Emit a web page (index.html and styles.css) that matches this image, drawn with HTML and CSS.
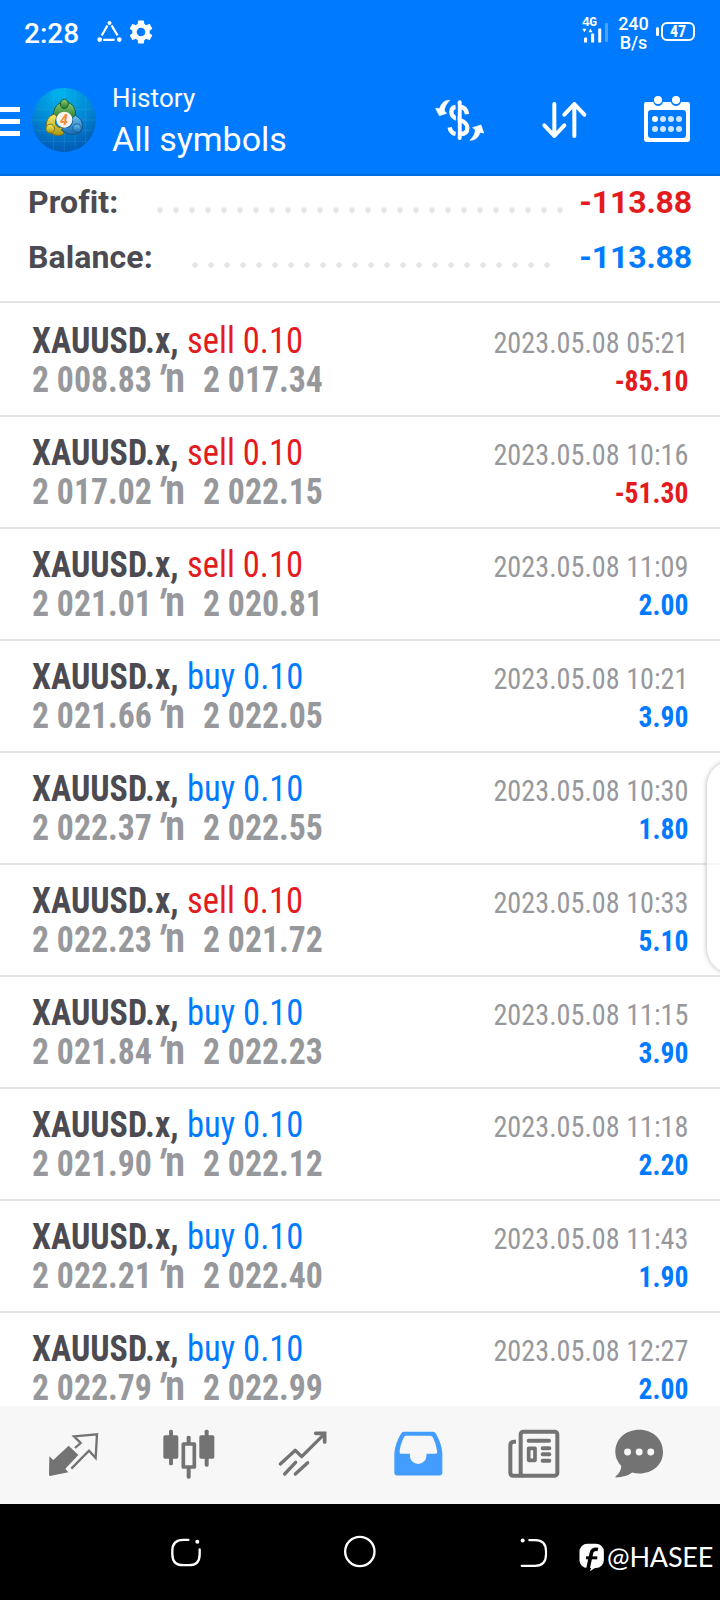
FILE: index.html
```html
<!DOCTYPE html>
<html lang="en">
<head>
<meta charset="utf-8">
<title>History</title>
<link rel="stylesheet" href="styles.css">
</head>
<body>
<div class="screen">
  <header class="top">
    <div class="status">
      <span class="clock">2:28</span>
      <svg class="s-tri" viewBox="290 60 74 68" fill="none" stroke="#fff" stroke-width="6.500"><path d="M321 76L304 106M333 76L351 106M308 119H342"/><g fill="#fff" stroke="none"><circle cx="327" cy="69" r="6"/><circle cx="298" cy="118" r="7"/><circle cx="356" cy="118" r="7"/></g></svg>
      <svg class="s-gear" viewBox="2.2 2 19.6 20" fill="#fff"><path d="M19.14 12.94c.04-.3.06-.61.06-.94 0-.32-.02-.64-.07-.94l2.03-1.58c.18-.14.23-.41.12-.61l-1.92-3.32c-.12-.22-.37-.29-.59-.22l-2.39.96c-.5-.38-1.03-.7-1.62-.94L14.4 2.8c-.04-.24-.24-.41-.48-.41h-3.84c-.24 0-.43.17-.47.41l-.36 2.54c-.59.24-1.13.57-1.62.94l-2.39-.96c-.22-.08-.47 0-.59.22L2.74 8.87c-.12.21-.08.47.12.61l2.03 1.58c-.05.3-.09.63-.09.94s.02.64.07.94l-2.03 1.58c-.18.14-.23.41-.12.61l1.92 3.32c.12.22.37.29.59.22l2.39-.96c.5.38 1.03.7 1.62.94l.36 2.54c.05.24.24.41.48.41h3.84c.24 0 .44-.17.47-.41l.36-2.54c.59-.24 1.13-.56 1.62-.94l2.39.96c.22.08.47 0 .59-.22l1.92-3.32c.12-.22.07-.47-.12-.61l-2.01-1.58zM12 15.6c-1.98 0-3.6-1.62-3.6-3.6s1.62-3.6 3.6-3.6 3.6 1.62 3.6 3.6-1.62 3.6-3.6 3.6z"/></svg>
      <div class="signal">
        <span class="net">4G</span>
        <svg viewBox="666 83 80 44" fill="#fff"><path d="M667 85h12l-6 10zM685 95h12l-6-10z"/><rect x="672" y="111" width="9" height="15" rx="2"/><rect x="693" y="99" width="9" height="27" rx="2"/><rect x="714" y="84" width="9" height="42" rx="2"/></svg>
        <i class="bar-off"></i>
      </div>
      <div class="rate"><span>240</span><span>B/s</span></div>
      <i class="bat-tip"></i>
      <span class="battery">47</span>
    </div>
    <div class="bar">
      <svg class="menu" viewBox="0 0 20 29" fill="#fff"><path d="M0 0h20v5H0zM0 12h20v5H0zM0 24h20v5H0z"/></svg>
      <svg class="logo" viewBox="96 264 192 192">
        <defs>
          <radialGradient id="bg" cx=".45" cy=".08" r=".95"><stop offset="0" stop-color="#00b4ee"/><stop offset=".55" stop-color="#0385d2"/><stop offset="1" stop-color="#0056b0"/></radialGradient>
          <linearGradient id="gr" x2="0" y2="1"><stop offset="0" stop-color="#8fd07c"/><stop offset="1" stop-color="#22772b"/></linearGradient>
          <linearGradient id="ye" x2="0" y2="1"><stop offset="0" stop-color="#f5ee6b"/><stop offset="1" stop-color="#a99712"/></linearGradient>
          <linearGradient id="bl" x2="0" y2="1"><stop offset="0" stop-color="#6fc3ef"/><stop offset="1" stop-color="#1268b5"/></linearGradient>
        </defs>
        <circle cx="192" cy="360" r="96" fill="url(#bg)"/>
        <path d="M161 270V450M193 264V456M225 270V450M257 290V430M110 328H274M97 360H287M110 392H274M122 424H262" stroke="#5cc6f0" stroke-opacity=".28" stroke-width="2"/>
        <g stroke-width="3">
          <path d="M160 352C158 322 175 306 195 306C219 308 229 325 226 352L214 358C208 334 180 334 172 350Z" fill="url(#gr)" stroke="#245f34"/>
          <path d="M166 342C143 346 134 368 142 388C152 407 178 410 192 402L188 382C170 386 160 372 170 352Z" fill="url(#ye)" stroke="#736b23"/>
          <path d="M226 346C246 356 252 376 244 394C228 410 200 404 184 390L194 380C212 386 220 372 216 354Z" fill="url(#bl)" stroke="#195785"/>
          <ellipse cx="193" cy="312" rx="12" ry="14" fill="url(#gr)" stroke="#206126"/>
          <circle cx="151" cy="386" r="13" fill="url(#ye)" stroke="#837719"/>
          <circle cx="231" cy="385" r="13" fill="url(#bl)" stroke="#185e98"/>
        </g>
        <circle cx="193" cy="359" r="24" fill="#f6f3f1"/>
        <text class="logo-num" x="192" y="374" text-anchor="middle">4</text>
      </svg>
      <div class="titles"><span class="t1">History</span><span class="t2">All symbols</span></div>
      <svg class="a-money" viewBox="226 296 150 126" fill="none" stroke="#fff">
        <path d="M300 306V413" stroke-width="12" stroke-linecap="round"/>
        <path d="M322 342C320 325 311 320 300 320M288 320C279 321 275 328 275 336C275 348 284 353 300 359C317 365 323 371 323 383C323 396 314 401 303 401M288 401C278 399 272 393 270 381" stroke-width="13"/>
        <path d="M291 312V408" stroke="#007bff" stroke-width="5"/>
        <path d="M270 300C256 299 244 309 240 325L228 324L239 346L261 339L254 332C254 319 261 310 270 300ZM331 420C346 420 357 411 361 396L372 398L364 374L339 382L347 388C347 400 341 409 331 420Z" fill="#fff" stroke="#fff" stroke-width="2"/>
      </svg>
      <svg class="a-sort" viewBox="545 303 135 114" fill="none" stroke="#fff" stroke-width="12" stroke-linecap="round" stroke-linejoin="round"><path d="M582 312V408M552 376L582 408L612 376M642 408V312M612 344L642 312L672 344"/></svg>
      <svg class="a-cal" viewBox="852 288 138 138"><path fill="#fff" fill-rule="evenodd" d="M858 306H880C884 322 905 322 909 306H933C937 322 959 322 963 306H984Q990 306 990 313V418Q990 426 982 426H860Q852 426 852 418V313Q852 306 858 306ZM873 330Q864 330 864 339V405Q864 414 873 414H969Q978 414 978 405V339Q978 330 969 330Z"/><g fill="#fff"><circle cx="894" cy="300" r="12"/><circle cx="948" cy="300" r="12"/><circle cx="885" cy="357" r="9"/></g><g fill="#cce4ff"><circle cx="909" cy="357" r="9"/><circle cx="933" cy="357" r="9"/><circle cx="957" cy="357" r="9"/><circle cx="885" cy="387" r="9"/><circle cx="909" cy="387" r="9"/><circle cx="933" cy="387" r="9"/><circle cx="957" cy="387" r="9"/></g></svg>
    </div>
  </header>

  <section class="summary">
    <div class="sum"><span class="sum-label">Profit:</span><i class="dots dots-profit"></i><span class="sum-val neg">-113.88</span></div>
    <div class="sum"><span class="sum-label">Balance:</span><i class="dots dots-balance"></i><span class="sum-val pos">-113.88</span></div>
  </section>

  <main class="deals">
    <div class="deal"><div class="l"><p class="name"><b>XAUUSD.x,</b><span class="neg">sell 0.10</span></p><p class="price"><span>2 008.83</span><i class="prime">′</i><i class="n">n</i><span>2 017.34</span></p></div><div class="r"><p class="date">2023.05.08 05:21</p><p class="pl neg">-85.10</p></div></div>
    <div class="deal"><div class="l"><p class="name"><b>XAUUSD.x,</b><span class="neg">sell 0.10</span></p><p class="price"><span>2 017.02</span><i class="prime">′</i><i class="n">n</i><span>2 022.15</span></p></div><div class="r"><p class="date">2023.05.08 10:16</p><p class="pl neg">-51.30</p></div></div>
    <div class="deal"><div class="l"><p class="name"><b>XAUUSD.x,</b><span class="neg">sell 0.10</span></p><p class="price"><span>2 021.01</span><i class="prime">′</i><i class="n">n</i><span>2 020.81</span></p></div><div class="r"><p class="date">2023.05.08 11:09</p><p class="pl pos">2.00</p></div></div>
    <div class="deal"><div class="l"><p class="name"><b>XAUUSD.x,</b><span class="pos">buy 0.10</span></p><p class="price"><span>2 021.66</span><i class="prime">′</i><i class="n">n</i><span>2 022.05</span></p></div><div class="r"><p class="date">2023.05.08 10:21</p><p class="pl pos">3.90</p></div></div>
    <div class="deal"><div class="l"><p class="name"><b>XAUUSD.x,</b><span class="pos">buy 0.10</span></p><p class="price"><span>2 022.37</span><i class="prime">′</i><i class="n">n</i><span>2 022.55</span></p></div><div class="r"><p class="date">2023.05.08 10:30</p><p class="pl pos">1.80</p></div></div>
    <div class="deal"><div class="l"><p class="name"><b>XAUUSD.x,</b><span class="neg">sell 0.10</span></p><p class="price"><span>2 022.23</span><i class="prime">′</i><i class="n">n</i><span>2 021.72</span></p></div><div class="r"><p class="date">2023.05.08 10:33</p><p class="pl pos">5.10</p></div></div>
    <div class="deal"><div class="l"><p class="name"><b>XAUUSD.x,</b><span class="pos">buy 0.10</span></p><p class="price"><span>2 021.84</span><i class="prime">′</i><i class="n">n</i><span>2 022.23</span></p></div><div class="r"><p class="date">2023.05.08 11:15</p><p class="pl pos">3.90</p></div></div>
    <div class="deal"><div class="l"><p class="name"><b>XAUUSD.x,</b><span class="pos">buy 0.10</span></p><p class="price"><span>2 021.90</span><i class="prime">′</i><i class="n">n</i><span>2 022.12</span></p></div><div class="r"><p class="date">2023.05.08 11:18</p><p class="pl pos">2.20</p></div></div>
    <div class="deal"><div class="l"><p class="name"><b>XAUUSD.x,</b><span class="pos">buy 0.10</span></p><p class="price"><span>2 022.21</span><i class="prime">′</i><i class="n">n</i><span>2 022.40</span></p></div><div class="r"><p class="date">2023.05.08 11:43</p><p class="pl pos">1.90</p></div></div>
    <div class="deal"><div class="l"><p class="name"><b>XAUUSD.x,</b><span class="pos">buy 0.10</span></p><p class="price"><span>2 022.79</span><i class="prime">′</i><i class="n">n</i><span>2 022.99</span></p></div><div class="r"><p class="date">2023.05.08 12:27</p><p class="pl pos">2.00</p></div></div>
  </main>
  <div class="edge-panel"></div>

  <nav class="tabs">
    <svg class="n1" viewBox="147 88 150 150"><path d="M206 138L235 166L196 207L205 218L150 229Q147 228 147 225L148 170L160 181Z" fill="#737373"/><path d="M225 145L242 130L222 110L291 104L287 175L267 153L214 207" fill="none" stroke="#737373" stroke-width="7"/></svg>
    <svg class="n2" viewBox="488 88 156 150" fill="#737373"><rect x="489" y="107" width="45" height="70" rx="5"/><rect x="506" y="90" width="12" height="107" rx="5"/><rect x="597" y="107" width="45" height="70" rx="5"/><rect x="613" y="90" width="12" height="111" rx="5"/><rect x="559" y="108" width="12" height="25" rx="5"/><rect x="559" y="200" width="12" height="37" rx="5"/><rect x="549" y="133" width="33" height="69" fill="none" stroke="#737373" stroke-width="11" stroke-linejoin="round"/></svg>
    <svg class="n3" viewBox="838 88 150 150" fill="none" stroke="#737373" stroke-width="10" stroke-linecap="round" stroke-linejoin="round"><path d="M842 193L887 152L906 171L973 104M855 223L888 188M887 223L924 189"/><path d="M948 101H975V127" stroke-width="11" stroke-linejoin="miter"/></svg>
    <svg class="n4" viewBox="102 88 148 150"><path fill="#429dfe" fill-rule="evenodd" d="M132 96H219Q226 96 229 102Q246 133 248 160V219Q248 228 239 228H112Q103 228 103 219V160Q106 130 123 102Q126 96 132 96ZM138 108Q133 109 130 116Q120 139 119 156Q118 162 123 162H150V168A25 25 0 0 0 200 168V162H229Q234 161 232 154Q230 134 220 114Q217 108 212 108Z"/></svg>
    <svg class="n5" viewBox="444 88 154 150" fill="none" stroke="#737373" stroke-width="12"><rect x="481" y="96" width="110" height="132" rx="8"/><path d="M467 126H460Q450 126 450 138V219Q450 228 460 228H488"/><rect x="505" y="146" width="19" height="36" stroke-width="11" stroke-linejoin="round"/><path d="M505 123H566M547 146H567M547 164H567M547 183H567" stroke-linecap="round"/></svg>
    <svg class="n6" viewBox="764 88 148 150"><path fill="#737373" d="M837 90C880 90 909 120 909 157C909 195 878 222 837 222Q826 222 816 219Q798 233 766 234Q763 232 768 229Q782 217 783 199Q765 181 765 157C765 118 796 90 837 90Z"/><g fill="#f7f7f7"><circle cx="802" cy="157" r="10.5"/><circle cx="837" cy="157" r="10.5"/><circle cx="872" cy="157" r="10.5"/></g></svg>
  </nav>

  <footer class="sys">
    <svg class="k1" viewBox="510 410 96 92" fill="none" stroke="#fff" stroke-width="7" stroke-linecap="round"><path d="M565 418H550Q517 418 517 451V461Q517 494 550 494H567Q599 494 599 461V447"/><circle cx="592" cy="424" r="6" fill="#fff" stroke="none"/></svg>
    <svg class="k2" viewBox="1030 406 100 100" fill="none" stroke="#fff" stroke-width="7"><circle cx="1081" cy="456" r="44.500"/></svg>
    <svg class="k3" viewBox="480 410 84 92" fill="none" stroke="#fff" stroke-width="6.500" stroke-linecap="round"><path d="M508 419H525Q558 419 558 452V462Q558 496 525 496H485"/><circle cx="488" cy="420" r="6" fill="#fff" stroke="none"/></svg>
    <svg class="fb" viewBox="657 430 78 88"><rect x="658" y="432" width="74" height="74" rx="24" fill="#fff"/><path d="M714 450Q697 446 694 461L682 517" fill="none" stroke="#000" stroke-width="11"/><path d="M678 475H712" stroke="#000" stroke-width="9"/><path d="M690 516L695 500L706 505Z" fill="#fff"/></svg>
    <span class="tag">@HASEE</span>
  </footer>
</div>
</body>
</html>
```
FILE: styles.css
```css
* { box-sizing: border-box; }
body { margin: 0; font-family: Roboto, "Liberation Sans", sans-serif; background: #fff; }
p { margin: 0; }
svg { display: block; flex: none; overflow: visible; }
.screen { width: 720px; height: 1600px; display: flex; flex-direction: column; overflow: hidden; position: relative; }
.neg { color: #e31b1e; }
.pos { color: #007bff; }

.top { height: 176px; flex: none; background: #007bff; border-bottom: 2px solid #006ee0; color: #fff; }
.status { height: 64px; display: flex; align-items: flex-start; }
.clock { margin: 17px 0 0 24px; width: 73px; font-size: 28px; line-height: 34px; font-weight: 500; white-space: nowrap; }
.s-tri { width: 25px; height: 23px; margin-top: 20px; }
.s-gear { width: 24px; height: 24px; margin: 20px 0 0 7px; }
.signal { margin: 17px 0 0 429px; width: 27px; height: 26px; position: relative; }
.signal svg { width: 27px; height: 15px; }
.net { display: block; font: bold 13px/11px "Liberation Mono", monospace; height: 11px; letter-spacing: -.5px; }
.bar-off { position: absolute; left: 23px; top: 6px; width: 3px; height: 19px; background: #4da2ff; border-radius: 1px; }
.rate { margin: 14px 0 0 8px; width: 33px; display: flex; flex-direction: column; align-items: center; font-size: 18px; line-height: 19px; font-weight: 500; }
.bat-tip { width: 3px; height: 9px; margin: 27px 2px 0 6px; background: #fff; border-radius: 2px; }
.battery { width: 34px; height: 19px; margin-top: 22px; border: 2px solid #fff; border-radius: 6px; font-size: 16px; line-height: 16px; font-family: "Roboto Condensed", Roboto, sans-serif; font-weight: 700; text-align: center; }

.bar { display: flex; align-items: flex-start; height: 110px; }
.menu { width: 20px; height: 29px; margin: 43px 12px 0 0; }
.logo { width: 64px; height: 64px; margin-top: 24px; }
.logo-num { font: italic bold 42px Roboto, sans-serif; fill: #f28b35; }
.titles { margin: 18px 0 0 16px; width: 323px; display: flex; flex-direction: column; white-space: nowrap; }
.t1 { font-size: 26px; line-height: 32px; letter-spacing: .1px; }
.t2 { font-size: 34px; line-height: 50px; }
.a-money { width: 50px; height: 42px; margin-top: 35px; }
.a-sort { width: 45px; height: 38px; margin: 37px 0 0 57px; }
.a-cal { width: 46px; height: 46px; margin: 32px 0 0 57px; }

.summary { flex: none; height: 127px; padding: 6px 28px 0; border-bottom: 2px solid #e5e5e5; }
.sum { display: flex; height: 55px; font-size: 32px; line-height: 40px; font-weight: 700; }
.sum-label { color: #4c4b51; letter-spacing: .1px; }
.dots { width: 406px; height: 6px; margin: 25px 0 0 auto; background: radial-gradient(circle at 3px 3px, #e5e5e5 2.4px, transparent 3px) 0 0 / 16px 6px repeat-x; }
.dots-balance { width: 358px; margin-right: 13px; }
.sum-val { width: 111px; margin-left: 18px; display: flex; justify-content: flex-end; letter-spacing: -.15px; }

.deals { flex: none; height: 1103px; padding-top: 2px; overflow: hidden; font-family: "Roboto Condensed", Roboto, sans-serif; }
.deal { height: 112px; padding: 17px 32px 0; display: flex; justify-content: space-between; border-bottom: 2px solid #e5e5e5; white-space: nowrap; }
.name, .price { display: flex; font-size: 37px; }
.name { line-height: 38px; }
.name b, .name span, .price span { transform: scaleX(.916); transform-origin: 0 50%; }
.name b { width: 155px; color: #4c4b51; }
.name span { transform: scaleX(.934); }
.price { margin-top: 2px; height: 35px; line-height: 36px; color: #97989c; font-weight: 700; }
.price span { width: 126px; transform: scaleX(.912); }
.price i { font-style: normal; }
.price .prime { width: 7px; font-size: 37px; transform: skewX(-14deg); -webkit-text-stroke: .5px #97989c; }
.price .n { width: 38px; font-size: 43px; line-height: 31px; font-weight: 600; transform: scaleX(.96); transform-origin: 0 50%; }
.r { padding-top: 2px; font-size: 30px; line-height: 38px; text-align: right; }
.date, .pl { transform: scaleX(.94); transform-origin: 100% 50%; }
.date { color: #97989c; }
.pl { font-weight: 700; transform: scaleX(.92); }
.edge-panel { position: absolute; left: 706px; top: 760px; width: 60px; height: 214px; border: 1px solid #dcdcdc; border-radius: 26px; background: rgba(255,255,255,.6); box-shadow: 0 0 4px rgba(0,0,0,.22); }

.tabs { flex: none; height: 98px; background: #f7f7f7; display: flex; padding: 23px 0 0 49px; }
.tabs svg { height: 50px; }
.n1 { width: 50px; }
.n2 { width: 52px; margin-left: 64px; }
.n3 { width: 50px; margin-left: 64px; }
.n4 { width: 49px; margin-left: 65px; }
.n5 { width: 52px; margin-left: 65px; }
.n6 { width: 49px; margin-left: 55px; }

.sys { flex: none; height: 96px; background: #000; color: #fff; display: flex; align-items: flex-start; }
.k1 { width: 32px; height: 31px; margin: 33px 0 0 170px; }
.k2 { width: 33px; height: 33px; margin: 31px 0 0 141px; }
.k3 { width: 28px; height: 31px; margin: 33px 0 0 144px; }
.fb { width: 26px; height: 29px; margin: 39px 0 0 31px; }
.tag { margin: 34px 0 0 2px; font-family: Lato, sans-serif; font-size: 27px; line-height: 38px; letter-spacing: -.2px; white-space: nowrap; }
```
